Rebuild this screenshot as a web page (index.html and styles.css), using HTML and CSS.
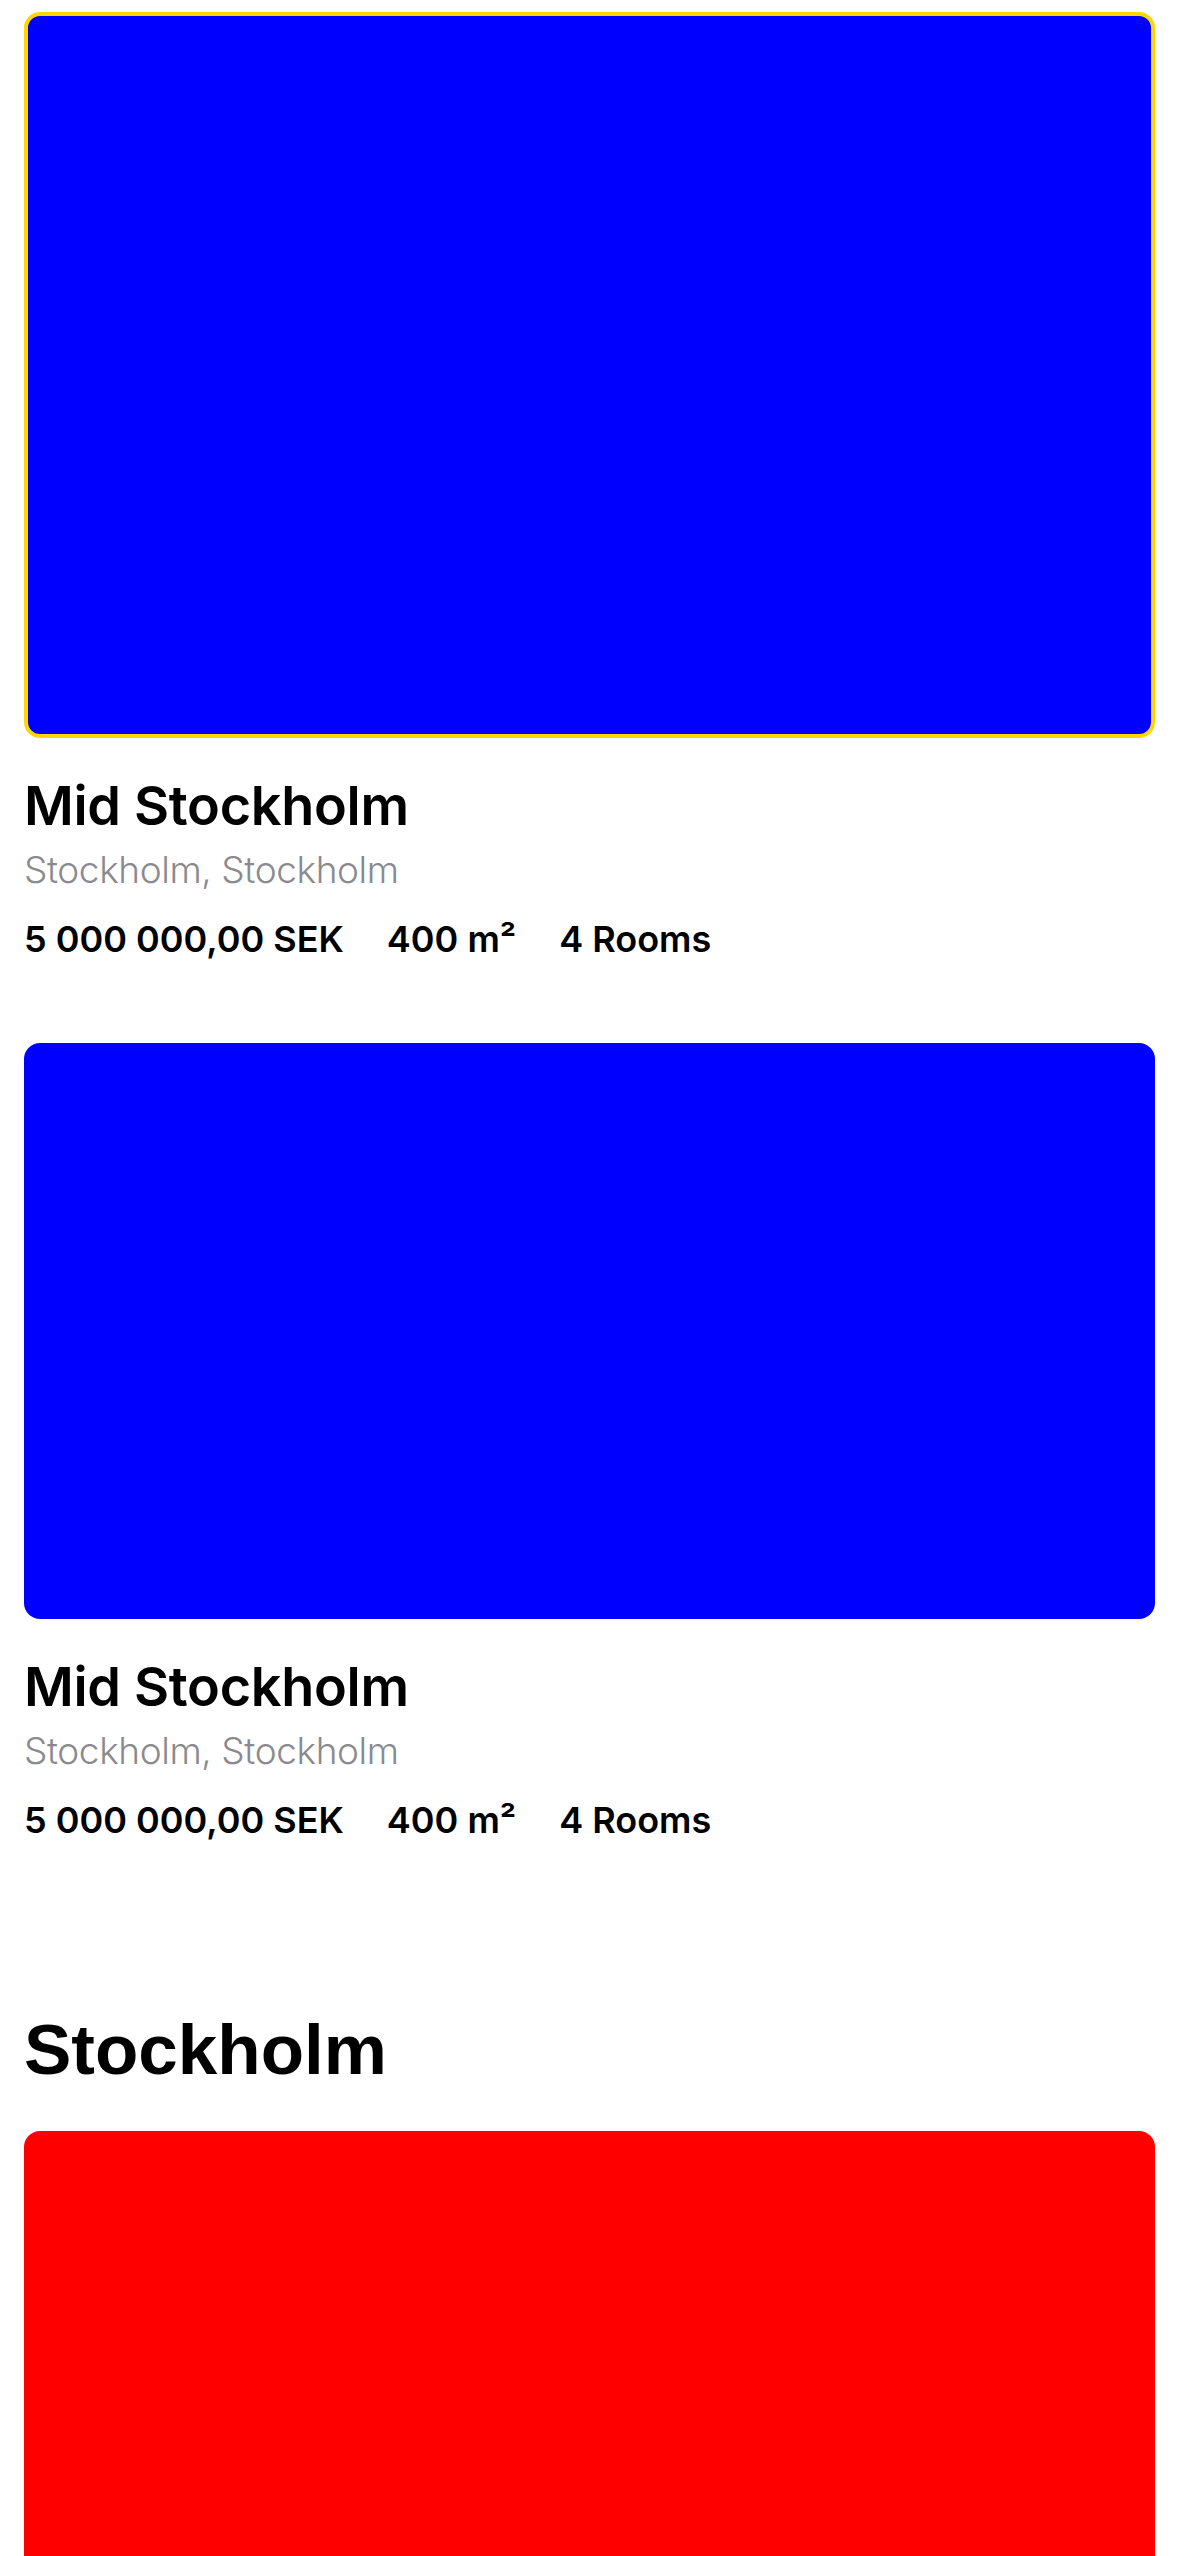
FILE: index.html
```html
<!DOCTYPE html>
<html lang="en">
<head>
<meta charset="utf-8">
<title>Listings</title>
<link rel="stylesheet" href="styles.css">
</head>
<body>
<main class="feed">
  <article class="listing">
    <div class="photo photo-blue photo-selected"></div>
    <h2 class="listing-title">Mid Stockholm</h2>
    <p class="listing-location">Stockholm, Stockholm</p>
    <div class="listing-stats">
      <span>5 000 000,00 SEK</span>
      <span>400 m²</span>
      <span>4 Rooms</span>
    </div>
  </article>
  <article class="listing listing-next">
    <div class="photo photo-blue photo-short"></div>
    <h2 class="listing-title">Mid Stockholm</h2>
    <p class="listing-location">Stockholm, Stockholm</p>
    <div class="listing-stats">
      <span>5 000 000,00 SEK</span>
      <span>400 m²</span>
      <span>4 Rooms</span>
    </div>
  </article>
  <section class="city">
    <h1 class="city-title">Stockholm</h1>
    <div class="photo photo-red photo-short"></div>
  </section>
</main>
</body>
</html>
```
FILE: styles.css
```css
html, body {
  margin: 0;
  padding: 0;
  background: #ffffff;
}
body {
  font-family: Inter, "Noto Sans", sans-serif;
  color: #000000;
}
.feed {
  display: flex;
  flex-direction: column;
  padding: 12px 24px 0;
}
.listing {
  display: flex;
  flex-direction: column;
}
.listing-next {
  margin-top: 80px;
}
.photo {
  box-sizing: border-box;
  width: 100%;
  border-radius: 16px;
}
.photo-blue {
  background: #0000ff;
  height: 576px;
}
.photo-selected {
  height: 726px;
  border: 4px solid #ffd600;
}
.photo-short {
  height: 576px;
}
.photo-red {
  background: #ff0000;
}
.listing-title {
  margin: 36px 0 0;
  font-size: 54px;
  line-height: 64px;
  font-weight: 600;
  letter-spacing: -0.3px;
}
.listing-location {
  margin: 4px 0 0;
  font-size: 37px;
  line-height: 56px;
  font-weight: 300;
  letter-spacing: -0.4px;
  color: #8a8a8e;
}
.listing-stats {
  display: flex;
  gap: 43px;
  margin-top: 17px;
  font-size: 36px;
  line-height: 48px;
  font-weight: 600;
}
.city {
  display: flex;
  flex-direction: column;
  margin-top: 166px;
}
.city-title {
  margin: 0 0 41px;
  font-family: "Liberation Sans", Arial, sans-serif;
  font-size: 71px;
  line-height: 80px;
  font-weight: 700;
}
```
